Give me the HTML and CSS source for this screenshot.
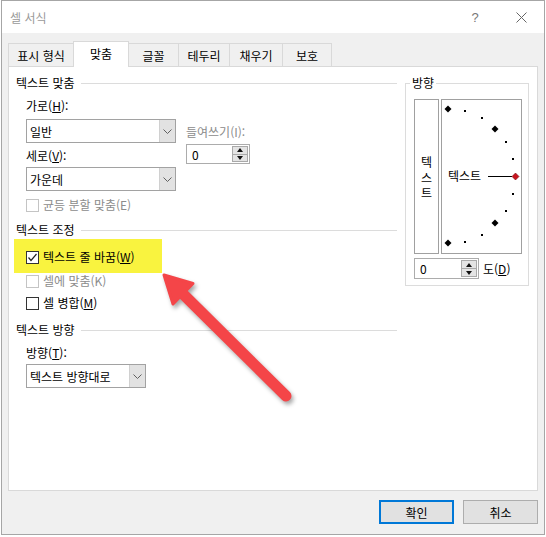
FILE: index.html
```html
<!DOCTYPE html>
<html lang="ko">
<head>
<meta charset="utf-8">
<title>셀 서식</title>
<link rel="stylesheet" href="styles.css">
</head>
<body>
<div class="window">
  <div class="titlebar">
    <span class="title">셀 서식</span>
    <span class="caption-btn">?</span>
    <span class="caption-btn"><svg width="11" height="11" viewBox="0 0 11 11"><path d="M0.5 0.5L10.5 10.5M10.5 0.5L0.5 10.5" stroke="#666" stroke-width="1" fill="none"/></svg></span>
  </div>
  <div class="content">
    <div class="tabs">
      <div class="tab t-format">표시 형식</div>
      <div class="tab active t-align">맞춤</div>
      <div class="tab t-font">글꼴</div>
      <div class="tab t-border">테두리</div>
      <div class="tab t-fill">채우기</div>
      <div class="tab t-protect">보호</div>
    </div>
    <div class="panel">
      <div class="left">
        <div class="group-head"><span>텍스트 맞춤</span><i class="rule"></i></div>
        <div class="sub align-row">
          <div class="align-col">
            <div class="label">가로(<u>H</u>):</div>
            <div class="combo w150 mt5"><span class="val">일반</span><span class="drop"><svg width="9" height="5" viewBox="0 0 9 5"><path d="M0.5 0.5L4.5 4.5L8.5 0.5" stroke="#606060" fill="none"/></svg></span></div>
            <div class="label mt5">세로(<u>V</u>):</div>
            <div class="combo w150 mt3"><span class="val">가운데</span><span class="drop"><svg width="9" height="5" viewBox="0 0 9 5"><path d="M0.5 0.5L4.5 4.5L8.5 0.5" stroke="#606060" fill="none"/></svg></span></div>
            <div class="check disabled mt6"><span class="box"></span><span>균등 분할 맞춤(E)</span></div>
          </div>
          <div class="indent-col">
            <div class="label gray">들여쓰기(I):</div>
            <div class="spin w64 mt4"><span class="val">0</span><span class="spin-btns"><span class="up"></span><span class="down"></span></span></div>
          </div>
        </div>

        <div class="group-head mt9"><span>텍스트 조정</span><i class="rule"></i></div>
        <div class="sub">
          <div class="check highlight"><span class="box checked"><svg width="11" height="11" viewBox="0 0 11 11"><path d="M1.5 5.5L4 8.5L9.5 2" stroke="#222" stroke-width="1.2" fill="none"/></svg></span><span>텍스트 줄 바꿈(<u>W</u>)</span></div>
          <div class="check disabled"><span class="box"></span><span>셀에 맞춤(K)</span></div>
          <div class="check mt6"><span class="box"></span><span>셀 병합(<u>M</u>)</span></div>
        </div>

        <div class="group-head mt11"><span>텍스트 방향</span><i class="rule"></i></div>
        <div class="sub">
          <div class="label mt7">방향(<u>T</u>):</div>
          <div class="combo w120 mt3"><span class="val">텍스트 방향대로</span><span class="drop"><svg width="9" height="5" viewBox="0 0 9 5"><path d="M0.5 0.5L4.5 4.5L8.5 0.5" stroke="#606060" fill="none"/></svg></span></div>
        </div>
      </div>

      <div class="orient">
        <span class="legend">방향</span>
        <div class="orient-boxes">
          <div class="vbox"><span>텍</span><span>스</span><span>트</span></div>
          <div class="dial">
            <svg class="dial-marks" width="79" height="153" viewBox="0 0 79 153">
              <g fill="#000">
                <path d="M6 5.5L9.5 9L6 12.5L2.5 9Z"/>
                <path d="M53 25.5L56.5 29L53 32.5L49.5 29Z"/>
                <path d="M53 119.5L56.5 123L53 126.5L49.5 123Z"/>
                <path d="M6 139.5L9.5 143L6 146.5L2.5 143Z"/>
                <rect x="22" y="10" width="2" height="2"/>
                <rect x="39" y="17" width="2" height="2"/>
                <rect x="63" y="41" width="2" height="2"/>
                <rect x="70" y="58" width="2" height="2"/>
                <rect x="70" y="93" width="2" height="2"/>
                <rect x="63" y="110" width="2" height="2"/>
                <rect x="39" y="134" width="2" height="2"/>
                <rect x="22" y="141" width="2" height="2"/>
              </g>
              <path d="M46 76.5H70" stroke="#000" stroke-width="1"/>
              <path d="M73.5 73L77 76.5L73.5 80L70 76.5Z" fill="#c8141e" stroke="#7a0a10" stroke-width="0.6"/>
            </svg>
            <span class="dial-text">텍스트</span>
          </div>
        </div>
        <div class="deg-row">
          <div class="spin w65"><span class="val">0</span><span class="spin-btns"><span class="up"></span><span class="down"></span></span></div>
          <span class="deg-label">도(<u>D</u>)</span>
        </div>
      </div>

      <svg class="annot-arrow" width="150" height="150" viewBox="0 0 150 150">
        <line x1="31" y1="32" x2="136" y2="136" stroke="#f44548" stroke-width="11" stroke-linecap="round"/>
        <polygon points="14,15 43,23.5 23,44" fill="#f44548" stroke="#f44548" stroke-width="3" stroke-linejoin="round"/>
      </svg>
    </div>
    <div class="actions">
      <div class="btn primary">확인</div>
      <div class="btn">취소</div>
    </div>
  </div>
</div>
</body>
</html>
```

FILE: styles.css
```css
* { box-sizing: border-box; }

body {
  margin: 0;
  background: #fff;
  font-family: "Noto Sans CJK KR", "Noto Sans", sans-serif;
  font-size: 12px;
  color: #000;
}

u { text-decoration: underline; text-underline-offset: 1px; }

.window {
  margin-left: 1px;
  width: 544px;
  height: 535px;
  border: 1px solid #a6a6a6;
  background: #f0f0f0;
  display: flex;
  flex-direction: column;
}

.titlebar {
  height: 32px;
  flex: none;
  background: #fff;
  display: flex;
  align-items: center;
}

.title {
  flex: 1;
  padding-left: 8px;
  color: #9a9a9a;
}

.caption-btn {
  width: 46px;
  height: 32px;
  display: flex;
  align-items: center;
  justify-content: center;
  color: #777;
  font-family: "Liberation Sans", sans-serif;
  font-size: 13px;
}

.content {
  flex: 1;
  padding: 8px 6px 0;
}

/* tabs */
.tabs {
  display: flex;
  align-items: flex-end;
  height: 25px;
}

.tab {
  height: 23px;
  margin-left: -1px;
  border: 1px solid #d9d9d9;
  border-bottom: none;
  background: #f0f0f0;
  display: flex;
  align-items: center;
  justify-content: center;
  white-space: nowrap;
}

.tab.t-format { margin-left: 0; width: 66px; }
.tab.t-align { width: 56px; }
.tab.t-font { width: 51px; }
.tab.t-border { width: 52px; }
.tab.t-fill { width: 54px; }
.tab.t-protect { width: 50px; }

.tab.active {
  height: 26px;
  margin-bottom: -1px;
  background: #fff;
  position: relative;
  z-index: 1;
  padding-bottom: 2px;
}

/* panel */
.panel {
  position: relative;
  height: 425px;
  border: 1px solid #d9d9d9;
  background: #fff;
  display: flex;
  align-items: flex-start;
  padding: 8px 8px 0 7px;
}

.left { width: 381px; }

.group-head {
  display: flex;
  align-items: center;
  height: 16px;
  line-height: 16px;
}

.rule {
  flex: 1;
  height: 1px;
  background: #dcdcdc;
  margin-left: 6px;
}

.sub { padding-left: 10px; }

.align-row {
  display: flex;
  margin-top: 7px;
}

.align-col { width: 150px; }

.indent-col {
  margin-left: 10px;
  padding-top: 26px;
}

.label {
  height: 16px;
  line-height: 16px;
  white-space: nowrap;
}

.gray { color: #8c8c8c; }

.mt3 { margin-top: 3px; }
.mt4 { margin-top: 4px; }
.mt5 { margin-top: 5px; }
.mt6 { margin-top: 6px; }
.mt7 { margin-top: 7px; }
.mt9 { margin-top: 9px; }
.mt11 { margin-top: 11px; }

.combo {
  height: 24px;
  border: 1px solid #a2a2a2;
  background: #fff;
  display: flex;
  align-items: stretch;
}

.combo .val {
  flex: 1;
  padding-left: 3px;
  display: flex;
  align-items: center;
  white-space: nowrap;
}

.combo .drop {
  width: 16px;
  flex: none;
  background: #e2e2e2;
  border-left: 1px solid #d0d0d0;
  display: flex;
  align-items: center;
  justify-content: center;
}

.w150 { width: 150px; }
.w120 { width: 120px; }
.w64 { width: 64px; }
.w65 { width: 65px; }

.spin {
  height: 20px;
  border: 1px solid #acacac;
  background: #fff;
  display: flex;
  align-items: stretch;
}

.spin .val {
  flex: 1;
  padding-left: 5px;
  display: flex;
  align-items: center;
}

.spin-btns {
  width: 16px;
  margin: 1px 1px 1px 0;
  border: 1px solid #a9a9a9;
  background: #e4e4e4;
  display: flex;
  flex-direction: column;
}

.spin-btns span {
  flex: 1;
  display: flex;
  align-items: center;
  justify-content: center;
}

.spin-btns .up { border-bottom: 1px solid #a9a9a9; }

.spin-btns .up::before {
  content: "";
  border-left: 3.5px solid transparent;
  border-right: 3.5px solid transparent;
  border-bottom: 4px solid #111;
}

.spin-btns .down::before {
  content: "";
  border-left: 3.5px solid transparent;
  border-right: 3.5px solid transparent;
  border-top: 4px solid #111;
}

/* checkboxes */
.check {
  display: flex;
  align-items: center;
  height: 16px;
  line-height: 16px;
  white-space: nowrap;
}

.check .box {
  width: 13px;
  height: 13px;
  border: 1px solid #333;
  background: #fff;
  margin-right: 4px;
  display: flex;
  align-items: center;
  justify-content: center;
  flex: none;
}

.check.disabled { color: #8c8c8c; }
.check.disabled .box { border-color: #c4c4c4; }

.check.highlight {
  height: 34px;
  width: 148px;
  margin-top: 1px;
  margin-left: -12px;
  padding-left: 12px;
  padding-top: 2px;
  background: #f9f33f;
}

/* orientation group */
.orient {
  margin-left: 8px;
  margin-top: 8px;
  width: 124px;
  height: 203px;
  border: 1px solid #dcdcdc;
  padding: 0 6px 0 8px;
  display: flex;
  flex-direction: column;
}

.legend {
  align-self: flex-start;
  margin: -9px 0 0 -4px;
  padding: 0 2px;
  background: #fff;
  line-height: 16px;
  height: 16px;
}

.orient-boxes {
  display: flex;
  gap: 2px;
  margin-top: 8px;
  height: 155px;
}

.vbox {
  width: 25px;
  border: 1px solid #a0a0a0;
  display: flex;
  flex-direction: column;
  align-items: center;
  justify-content: center;
  line-height: 15.5px;
  padding-top: 2px;
}

.dial {
  position: relative;
  width: 81px;
  border: 1px solid #a0a0a0;
}

.dial-marks {
  display: block;
}

.dial-text {
  position: absolute;
  left: 6px;
  top: 68px;
  line-height: 16px;
  background: #fff;
  white-space: nowrap;
}

.deg-row {
  display: flex;
  align-items: center;
  margin-top: 4px;
}

.deg-row .spin { height: 21px; }

.deg-label { margin-left: 4px; }

/* annotation arrow */
.annot-arrow {
  position: absolute;
  left: 141px;
  top: 193px;
  filter: drop-shadow(2px 3px 2px rgba(0, 0, 0, 0.35));
}

/* bottom buttons */
.actions {
  display: flex;
  justify-content: flex-end;
  gap: 9px;
  margin-top: 9px;
}

.btn {
  width: 75px;
  height: 24px;
  border: 1px solid #adadad;
  background: #e1e1e1;
  display: flex;
  align-items: center;
  justify-content: center;
}

.btn.primary { border: 2px solid #0078d7; }
```
